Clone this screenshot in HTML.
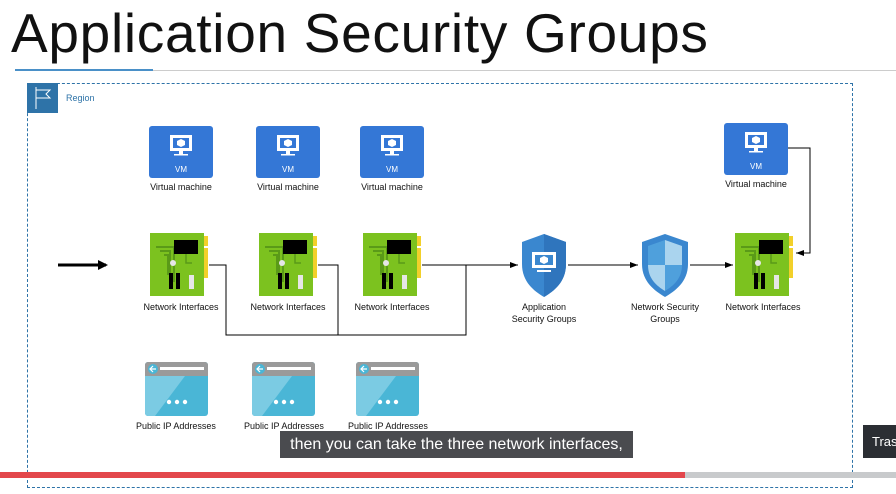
<!DOCTYPE html>
<html><head><style>
body{margin:0;width:896px;height:494px;overflow:hidden;background:#fff;font-family:"Liberation Sans",sans-serif;position:relative}
.a{position:absolute}
.t{position:absolute;font-size:9px;color:#111;text-align:center;width:120px;line-height:12px}
</style></head><body>
<div class="a" style="left:11px;top:2px;font-size:55px;color:#111;letter-spacing:0.7px;line-height:62px">Application Security Groups</div>
<div class="a" style="left:15px;top:70px;width:881px;height:1px;background:#ccc"></div>
<div class="a" style="left:15px;top:69px;width:138px;height:2px;background:#4a90c8"></div>
<div class="a" style="left:27px;top:83px;width:824px;height:403px;border:1px dashed #2e73a8"></div>
<div class="a" style="left:27px;top:83px;width:31px;height:30px;background:#2e73a8"></div>
<svg class="a" style="left:27px;top:83px" width="31" height="30"><path d="M9 4v22M9 7h14l-4 4 4 4H9" stroke="#fff" stroke-width="1" fill="none"/></svg>
<div class="a" style="left:66px;top:93px;font-size:9px;color:#2e73a8">Region</div>
<svg class="a" style="left:0;top:0" width="896" height="494">
<defs><marker id="m" markerUnits="userSpaceOnUse" markerWidth="8" markerHeight="6" refX="8" refY="3" orient="auto"><path d="M0 0L8 3L0 6z" fill="#000"/></marker>
<marker id="m2" markerUnits="userSpaceOnUse" markerWidth="10" markerHeight="10" refX="8" refY="5" orient="auto"><path d="M0 0L10 5L0 10z" fill="#000"/></marker>
<g id="vm"><rect width="64" height="52" rx="3" fill="#3477d6"/><rect x="21" y="9" width="22" height="16" fill="#fff"/><rect x="24" y="12" width="16" height="10" fill="#3477d6"/><path d="M32 13l4 2v4l-4 2-4-2v-4z" fill="#fff"/><rect x="30" y="25" width="4" height="3" fill="#fff"/><rect x="25" y="28" width="14" height="1.5" fill="#fff"/><text x="32" y="46" font-size="8" fill="#fff" text-anchor="middle" font-family="Liberation Sans">VM</text></g>
<g id="nic"><rect x="53" y="3" width="5" height="10" fill="#f2d02a"/><rect x="53" y="15" width="5" height="30" fill="#f2d02a"/><rect width="54" height="63" fill="#7cc21f"/><path d="M6 14h18v35M10 18h10v28M14 22h4v20" stroke="#5a9a18" stroke-width="2" fill="none"/><rect x="24" y="7" width="24" height="14" fill="#000"/><circle cx="23" cy="30" r="3" fill="#e6e6e6"/><rect x="19" y="40" width="4" height="16" fill="#000"/><rect x="26" y="40" width="4" height="16" fill="#000"/><rect x="39" y="42" width="5" height="14" fill="#e6e6e6"/><path d="M36 21v9h6" stroke="#5a9a18" stroke-width="1.5" fill="none"/></g>
<g id="ip"><rect width="63" height="54" rx="3" fill="#4ab6d6"/><path d="M3 0h57a3 3 0 0 1 3 3v11H0V3a3 3 0 0 1 3-3z" fill="#9a9a9a"/><path d="M0 14h40L10 54H3a3 3 0 0 1-3-3z" fill="#7bcbe3"/><circle cx="8" cy="7" r="5" fill="#4ab6d6"/><path d="M11 7H5m3-3l-3 3 3 3" stroke="#fff" stroke-width="1.2" fill="none"/><rect x="15" y="5" width="44" height="3" fill="#fff"/><circle cx="24" cy="40" r="2.2" fill="#fff"/><circle cx="32" cy="40" r="2.2" fill="#fff"/><circle cx="40" cy="40" r="2.2" fill="#fff"/></g>
</defs>
<use href="#vm" x="149" y="126"/><use href="#vm" x="256" y="126"/><use href="#vm" x="360" y="126"/><use href="#vm" x="724" y="123"/>
<use href="#nic" x="150" y="233"/><use href="#nic" x="259" y="233"/><use href="#nic" x="363" y="233"/><use href="#nic" x="735" y="233"/>
<use href="#ip" x="145" y="362"/><use href="#ip" x="252" y="362"/><use href="#ip" x="356" y="362"/>
<g stroke="#000" stroke-width="1" fill="none">
<path d="M209 265h17v70h240V265M318 265h20v70M422 265h44"/>
<path d="M466 265h52" marker-end="url(#m)"/>
<path d="M568 265h70" marker-end="url(#m)"/>
<path d="M690 265h43" marker-end="url(#m)"/>
<path d="M788 148h22v105h-14" marker-end="url(#m)"/>
</g>
<path d="M58 265h48" stroke="#000" stroke-width="3" marker-end="url(#m2)"/>
<path d="M544 234l22 8v22c0 18-12 27-22 33-10-6-22-15-22-33v-22z" fill="#3a87cf"/>
<path d="M544 234l22 8v22c0 18-12 27-22 33z" fill="#2f75bd"/>
<rect x="532" y="252" width="24" height="16" fill="#fff"/><rect x="535" y="255" width="18" height="10" fill="#3a87cf"/><path d="M544 256l4 2v4l-4 2-4-2v-4z" fill="#fff"/><rect x="537" y="270" width="14" height="2" fill="#fff"/>
<path d="M665 234l23 8v22c0 18-13 27-23 33-10-6-23-15-23-33v-22z" fill="#3a87cf"/>
<path d="M665 240l17 6v19h-17zM665 265v26c-8-5-17-12-17-26z" fill="#aad4ee"/>
<path d="M665 240v25h-17v-19z M665 265h17c0 14-9 21-17 26z" fill="#4fa0dc"/>
</svg>
<div class="t" style="left:121px;top:181px">Virtual machine</div>
<div class="t" style="left:228px;top:181px">Virtual machine</div>
<div class="t" style="left:332px;top:181px">Virtual machine</div>
<div class="t" style="left:696px;top:178px">Virtual machine</div>
<div class="t" style="left:121px;top:301px">Network Interfaces</div>
<div class="t" style="left:228px;top:301px">Network Interfaces</div>
<div class="t" style="left:332px;top:301px">Network Interfaces</div>
<div class="t" style="left:703px;top:301px">Network Interfaces</div>
<div class="t" style="left:484px;top:301px">Application<br>Security Groups</div>
<div class="t" style="left:605px;top:301px">Network Security<br>Groups</div>
<div class="t" style="left:116px;top:420px">Public IP Addresses</div>
<div class="t" style="left:224px;top:420px">Public IP Addresses</div>
<div class="t" style="left:328px;top:420px">Public IP Addresses</div>
<div class="a" style="left:280px;top:431px;width:353px;height:27px;background:#4a4b4f;color:#fff;font-size:16px;line-height:27px;text-align:center">then you can take the three network interfaces,</div>
<div class="a" style="left:863px;top:425px;width:40px;height:33px;background:#2b2e33;color:#fff;font-size:13px;line-height:33px;padding-left:9px">Tras</div>
<div class="a" style="left:0;top:472px;width:896px;height:6px;background:#c8cacc"></div>
<div class="a" style="left:0;top:472px;width:685px;height:6px;background:#e3474c"></div>
</body></html>
